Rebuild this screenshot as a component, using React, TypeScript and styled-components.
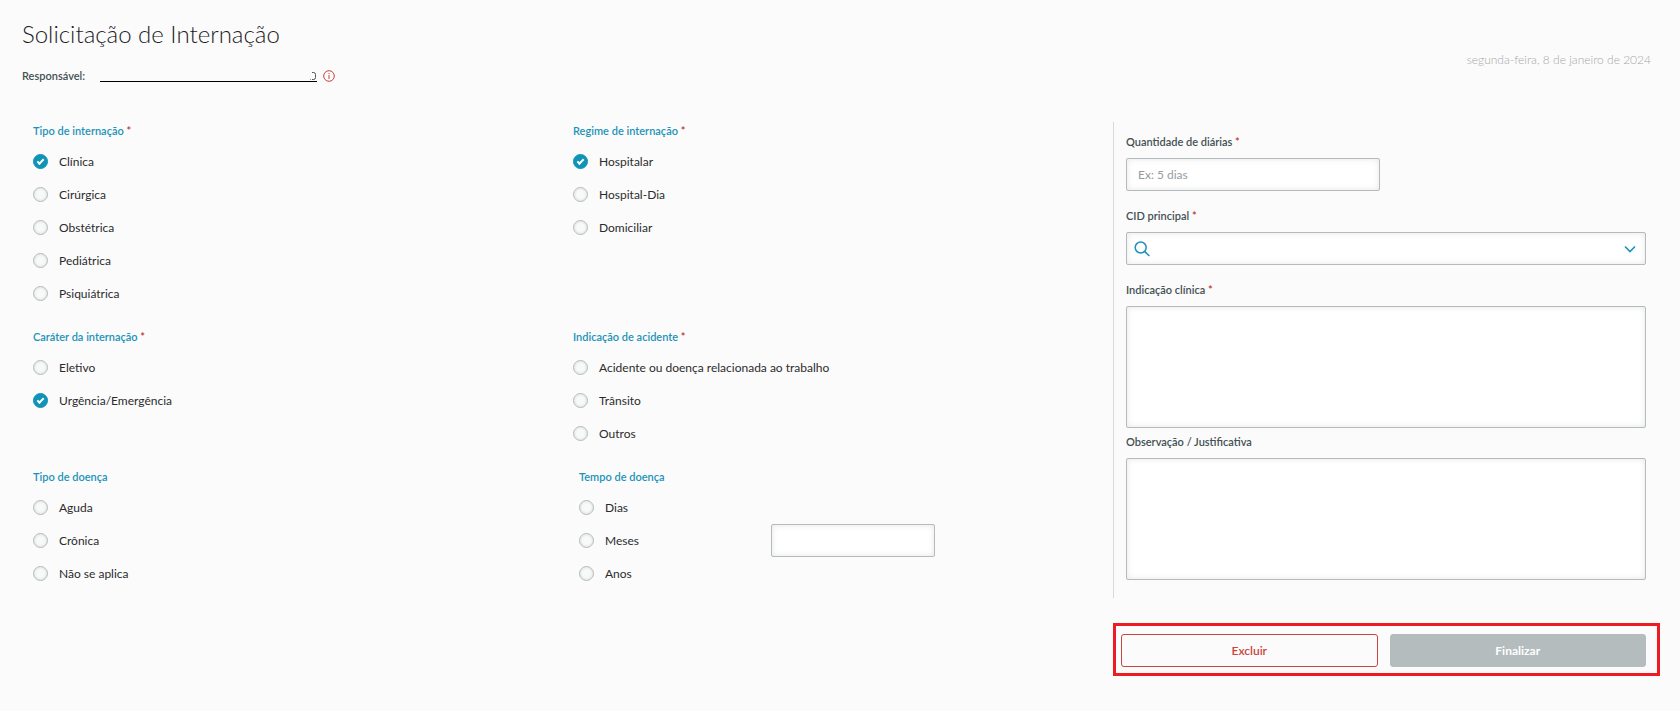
import React, { useId, useState } from 'react';
import styled, { createGlobalStyle } from 'styled-components';

const color = {
  page: '#fbfbfb',
  teal: '#0f93b7',
  tealText: '#1b93b8',
  text: '#2b2b2d',
  label: '#435053',
  border: '#b3bbbd',
  divider: '#d6d9d9',
  danger: '#c9453d',
  star: '#b8352d',
  frame: '#ed1c24',
  disabled: '#b4bcbe',
  muted: '#a3a8aa',
};

const GlobalStyle = createGlobalStyle`
  *, *::before, *::after { box-sizing: border-box; }
  body {
    margin: 0;
    background: ${color.page};
    color: ${color.text};
    font: 12px/16px Lato, "Open Sans", sans-serif;
  }
  button, input, textarea { font: inherit; color: inherit; }
`;

const Header = styled.header`
  display: flex;
  align-items: center;
  justify-content: space-between;
  padding: 18px 29px 0 22px;
`;

const Title = styled.h1`
  margin: 0;
  color: #1c1c1e;
  font-size: 24px;
  font-weight: 300;
  line-height: 32px;
`;

const Responsible = styled.div`
  display: flex;
  align-items: center;
  height: 20px;
  margin-top: 16px;
`;

const ResponsibleLabel = styled.span`
  margin-right: 15px;
  color: ${color.label};
  font-size: 11px;
  font-weight: 600;
`;

const NameLink = styled.a`
  display: flex;
  justify-content: flex-end;
  width: 217px;
  height: 12px;
  margin-right: 6px;
  border-bottom: 1px solid #000;
  color: inherit;
  text-decoration: none;
`;

const InfoButton = styled.button`
  display: flex;
  padding: 0;
  border: 0;
  background: none;
  color: ${color.danger};
`;

const Today = styled.time`
  padding-top: 16px;
  color: ${color.muted};
  font-weight: 300;
  line-height: 20px;
`;

const Form = styled.form`
  display: grid;
  grid-template-columns: repeat(3, minmax(0, 1fr));
  row-gap: 25px;
  padding: 36px 27px 32px 33px;
`;

const Choices = styled.div`
  grid-column: span 2;
  display: grid;
  grid-template-columns: repeat(2, minmax(0, 1fr));
  align-content: start;
  row-gap: 19px;
  padding-top: 1px;
`;

const Group = styled.fieldset<{ $indent?: boolean }>`
  min-width: 0;
  margin: 0;
  padding: 0 0 0 ${(p) => (p.$indent ? 6 : 0)}px;
  border: 0;
`;

const Legend = styled.legend`
  padding: 0 0 6px;
  color: ${color.tealText};
  font-size: 11px;
  font-weight: 600;
`;

const Star = styled.span`
  color: ${color.star};
`;

const GroupBody = styled.div`
  display: flex;
  align-items: center;
`;

const Options = styled.div`
  min-width: 192px;
`;

const Option = styled.label`
  display: flex;
  align-items: center;
  gap: 11px;
  height: 33px;
`;

const Radio = styled.input`
  display: grid;
  place-items: center;
  flex: none;
  width: 15px;
  height: 15px;
  margin: 0;
  appearance: none;
  border: 1px solid ${color.border};
  border-radius: 50%;
  background: #f8f9f9;
  box-shadow: inset 0 0 3px rgba(0, 0, 0, 0.16);

  &:checked {
    border-color: ${color.teal};
    background: ${color.teal};
    box-shadow: none;
  }

  &:checked::before {
    content: '';
    width: 7px;
    height: 4px;
    margin-bottom: 2px;
    border: solid #fff;
    border-width: 0 0 2px 2px;
    transform: rotate(-45deg);
  }
`;

const Panel = styled.section`
  padding: 12px 7px 18px 12px;
  border-left: 1px solid ${color.divider};
`;

const Field = styled.div<{ $gap?: number }>`
  display: flex;
  flex-direction: column;
  gap: 8px;
  margin-bottom: ${(p) => p.$gap ?? 17}px;
`;

const FieldLabel = styled.label`
  color: ${color.label};
  font-size: 11px;
  font-weight: 600;
`;

const TextInput = styled.input<{ $width?: string }>`
  width: ${(p) => p.$width ?? '100%'};
  height: 33px;
  padding: 0 11px;
  border: 1px solid ${color.border};
  border-radius: 2px;
  background: #fff;
  box-shadow: inset 0 0 6px rgba(0, 0, 0, 0.1);

  &::placeholder {
    color: #959c9f;
    opacity: 1;
  }
`;

const TextArea = styled.textarea`
  display: block;
  width: 100%;
  height: 122px;
  padding: 8px 11px;
  resize: none;
  border: 1px solid ${color.border};
  border-radius: 2px;
  background: #fff;
  box-shadow: inset 0 0 6px rgba(0, 0, 0, 0.1);
`;

const Combo = styled.div`
  display: flex;
  align-items: center;
  height: 33px;
  padding: 0 9px 0 7px;
  border: 1px solid ${color.border};
  border-radius: 2px;
  background: #fff;
  box-shadow: inset 0 0 6px rgba(0, 0, 0, 0.1);
  color: ${color.tealText};
`;

const ComboInput = styled.input`
  flex: 1;
  min-width: 0;
  padding: 0 8px;
  border: 0;
  outline: 0;
  background: none;
  color: ${color.text};
`;

const ComboToggle = styled.button`
  display: flex;
  padding: 0;
  border: 0;
  background: none;
  color: inherit;
`;

const Actions = styled.div`
  grid-column: 3;
  display: grid;
  grid-template-columns: 1fr 1fr;
  gap: 12px;
  margin-right: -7px;
  padding: 8px 11px 6px 5px;
  border: 3px solid ${color.frame};
`;

const ActionButton = styled.button<{ $variant: 'outline' | 'solid' }>`
  height: 33px;
  padding: 0;
  border: 1px solid ${(p) => (p.$variant === 'outline' ? color.danger : color.disabled)};
  border-radius: 3px;
  background: ${(p) => (p.$variant === 'outline' ? 'transparent' : color.disabled)};
  color: ${(p) => (p.$variant === 'outline' ? color.danger : '#fff')};
  font-weight: ${(p) => (p.$variant === 'outline' ? 600 : 700)};
`;

interface RadioGroupProps {
  title: string;
  options: string[];
  initial?: string;
  required?: boolean;
  indent?: boolean;
  children?: React.ReactNode;
}

function RadioGroup({ title, options, initial, required, indent, children }: RadioGroupProps) {
  const name = useId();
  const [value, setValue] = useState(initial);
  return (
    <Group $indent={indent}>
      <Legend>
        {title}
        {required && <Star> *</Star>}
      </Legend>
      <GroupBody>
        <Options>
          {options.map((option) => (
            <Option key={option}>
              <Radio
                type="radio"
                name={name}
                checked={value === option}
                onChange={() => setValue(option)}
              />
              {option}
            </Option>
          ))}
        </Options>
        {children}
      </GroupBody>
    </Group>
  );
}

export default function App() {
  return (
    <>
      <GlobalStyle />
      <Header>
        <div>
          <Title>Solicitação de Internação</Title>
          <Responsible>
            <ResponsibleLabel>Responsável:</ResponsibleLabel>
            <NameLink href="#" aria-label="Responsável">
              <svg width="8" height="11" fill="none" stroke="#4b5759">
                <path d="M3 2.5h1.5q2 0 2 2v3q0 2-2 2h-1.500" />
                <path d="M1 9.500h1" opacity=".6" />
              </svg>
            </NameLink>
            <InfoButton type="button" aria-label="Informações">
              <svg width="12" height="12" fill="none" stroke="currentColor">
                <circle cx="6" cy="6" r="5.300" />
                <path d="M6 5v4M6 3v1" />
              </svg>
            </InfoButton>
          </Responsible>
        </div>
        <Today dateTime="2024-01-08">segunda-feira, 8 de janeiro de 2024</Today>
      </Header>
      <Form onSubmit={(e) => e.preventDefault()}>
        <Choices>
          <RadioGroup
            title="Tipo de internação"
            required
            initial="Clínica"
            options={['Clínica', 'Cirúrgica', 'Obstétrica', 'Pediátrica', 'Psiquiátrica']}
          />
          <RadioGroup
            title="Regime de internação"
            required
            initial="Hospitalar"
            options={['Hospitalar', 'Hospital-Dia', 'Domiciliar']}
          />
          <RadioGroup
            title="Caráter da internação"
            required
            initial="Urgência/Emergência"
            options={['Eletivo', 'Urgência/Emergência']}
          />
          <RadioGroup
            title="Indicação de acidente"
            required
            options={['Acidente ou doença relacionada ao trabalho', 'Trânsito', 'Outros']}
          />
          <RadioGroup title="Tipo de doença" options={['Aguda', 'Crônica', 'Não se aplica']} />
          <RadioGroup title="Tempo de doença" indent options={['Dias', 'Meses', 'Anos']}>
            <TextInput $width="164px" aria-label="Tempo de doença" />
          </RadioGroup>
        </Choices>
        <Panel>
          <Field>
            <FieldLabel htmlFor="diarias">
              Quantidade de diárias<Star> *</Star>
            </FieldLabel>
            <TextInput id="diarias" $width="calc(50% - 6px)" placeholder="Ex: 5 dias" />
          </Field>
          <Field>
            <FieldLabel htmlFor="cid">
              CID principal<Star> *</Star>
            </FieldLabel>
            <Combo>
              <svg width="16" height="16" fill="none" stroke="currentColor" strokeWidth="1.500">
                <circle cx="6.700" cy="6.500" r="5.500" />
                <path d="M10.600 10.400l4.800 4.600" />
              </svg>
              <ComboInput id="cid" role="combobox" aria-expanded="false" />
              <ComboToggle type="button" aria-label="Abrir lista de CID">
                <svg width="12" height="12" fill="none" stroke="currentColor" strokeWidth="1.600">
                  <path d="M1 3.500l5 5 5-5" />
                </svg>
              </ComboToggle>
            </Combo>
          </Field>
          <Field $gap={6}>
            <FieldLabel htmlFor="indicacao">
              Indicação clínica<Star> *</Star>
            </FieldLabel>
            <TextArea id="indicacao" />
          </Field>
          <Field $gap={0}>
            <FieldLabel htmlFor="observacao">Observação / Justificativa</FieldLabel>
            <TextArea id="observacao" />
          </Field>
        </Panel>
        <Actions>
          <ActionButton type="button" $variant="outline">
            Excluir
          </ActionButton>
          <ActionButton type="submit" $variant="solid">
            Finalizar
          </ActionButton>
        </Actions>
      </Form>
    </>
  );
}
